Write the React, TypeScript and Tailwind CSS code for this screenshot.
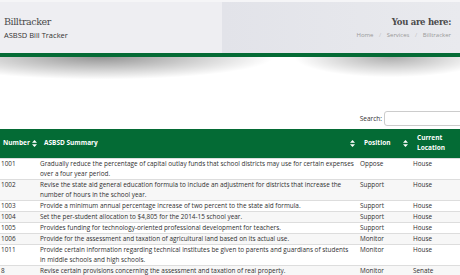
import React from 'react';

interface Bill {
  number: string;
  summary: string;
  position: string;
  location: string;
}

const bills: Bill[] = [
  {
    number: '1001',
    summary:
      'Gradually reduce the percentage of capital outlay funds that school districts may use for certain expenses over a four year period.',
    position: 'Oppose',
    location: 'House',
  },
  {
    number: '1002',
    summary:
      'Revise the state aid general education formula to include an adjustment for districts that increase the number of hours in the school year.',
    position: 'Support',
    location: 'House',
  },
  {
    number: '1003',
    summary: 'Provide a minimum annual percentage increase of two percent to the state aid formula.',
    position: 'Support',
    location: 'House',
  },
  {
    number: '1004',
    summary: 'Set the per-student allocation to $4,805 for the 2014-15 school year.',
    position: 'Support',
    location: 'House',
  },
  {
    number: '1005',
    summary: 'Provides funding for technology-oriented professional development for teachers.',
    position: 'Support',
    location: 'House',
  },
  {
    number: '1006',
    summary: 'Provide for the assessment and taxation of agricultural land based on its actual use.',
    position: 'Monitor',
    location: 'House',
  },
  {
    number: '1011',
    summary:
      'Provide certain information regarding technical institutes be given to parents and guardians of students in\u00a0middle schools and high schools.',
    position: 'Monitor',
    location: 'House',
  },
  {
    number: '8',
    summary: 'Revise certain provisions concerning the assessment and taxation of real property.',
    position: 'Monitor',
    location: 'Senate',
  },
];

const SortIcon = () => (
  <svg width="5" height="7" viewBox="0 0 5 7" className="inline-block shrink-0">
    <path d="M2.5 0 L5 2.8 L0 2.8 Z" fill="#ffffff" />
    <path d="M2.5 7 L5 4.2 L0 4.2 Z" fill="#ffffff" />
  </svg>
);

const App: React.FC = () => {
  return (
    <div className="w-[460px] h-[275px] overflow-hidden bg-white font-['Open_Sans',sans-serif] text-[#333]">
      {/* page title bar */}
      <div className="flex h-[53px] border-t-2 border-[#f5f5f7]">
        <div className="w-[222px] bg-[#eeeef2] pl-[4px] pt-[13px]">
          <h1 className="font-['DejaVu_Serif',serif] text-[9.5px] tracking-[-0.4px] leading-[14px] text-[#4a4a4a]">
            Billtracker
          </h1>
          <p className="text-[7.5px] leading-[10px] mt-[1px] text-[#333]">ASBSD Bill Tracker</p>
        </div>
        <div className="flex-1 bg-gradient-to-r from-[#e2e3e9] to-[#e9eaee] pr-[9px] pt-[13px] text-right">
          <h2 className="font-['DejaVu_Serif',serif] font-bold text-[8.5px] tracking-[-0.3px] leading-[14px] text-[#4a4a4a]">
            You are here:
          </h2>
          <p className="text-[6px] leading-[10px] mt-[1px] text-[#999999]">
            Home <span className="mx-[4px] text-[#c4c4c4]">/</span> Services{' '}
            <span className="mx-[4px] text-[#c4c4c4]">/</span> Billtracker
          </p>
        </div>
      </div>
      <div className="h-[4px] bg-[#046b35]" />
      <div className="h-[30px] bg-[radial-gradient(ellipse_50%_100%_at_22%_0%,rgba(0,0,0,0.42),rgba(0,0,0,0)_75%),radial-gradient(ellipse_28%_90%_at_85%_0%,rgba(0,0,0,0.32),rgba(0,0,0,0)_75%)]" />

      {/* search */}
      <div className="flex items-center justify-end mt-[24px] gap-[2px]">
        <span className="text-[6.5px]">Search:</span>
        <div className="w-[80px] h-[15px] -mr-[4px] rounded-[3px] border border-[#cccccc] bg-white" />
      </div>

      {/* bills table */}
      <table className="mt-[3px] w-[480px] table-fixed border-collapse text-[6.4px] leading-[10px] text-[#2f2f2f]">
        <colgroup>
          <col className="w-[38px]" />
          <col className="w-[318px]" />
          <col className="w-[54px]" />
          <col className="w-[70px]" />
        </colgroup>
        <thead>
          <tr className="bg-[#046b35] text-white text-[6.5px] h-[29px]">
            <th className="pl-[3px] pr-[1px] text-left font-bold">
              <div className="flex items-center justify-between">
                <span>Number</span>
                <SortIcon />
              </div>
            </th>
            <th className="pl-[6px] pr-[1px] text-left font-bold">
              <div className="flex items-center justify-between">
                <span>ASBSD Summary</span>
                <SortIcon />
              </div>
            </th>
            <th className="pl-[8px] pr-[2px] text-left font-bold">
              <div className="flex items-center justify-between">
                <span>Position</span>
                <SortIcon />
              </div>
            </th>
            <th className="pl-[7px] pr-[8px] text-left font-bold">
              <div className="flex items-center justify-between">
                <span className="w-[30px]">Current Location</span>
                <SortIcon />
              </div>
            </th>
          </tr>
        </thead>
        <tbody>
          {bills.map((bill, i) => (
            <tr
              key={bill.number}
              className={`align-top border-t border-[#dddddd] ${i % 2 === 1 ? 'bg-[#f7f7f7]' : 'bg-white'}`}
            >
              <td className="pl-[1px]">{bill.number}</td>
              <td className="pl-[2px]">{bill.summary}</td>
              <td className="pl-[4px]">{bill.position}</td>
              <td className="pl-[3px]">{bill.location}</td>
            </tr>
          ))}
        </tbody>
      </table>
    </div>
  );
};

export default App;
